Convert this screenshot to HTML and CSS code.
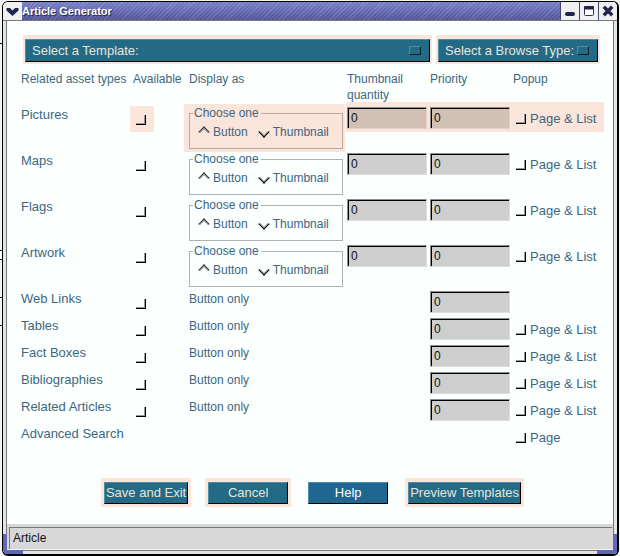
FILE: index.html
```
<!DOCTYPE html>
<html lang="en">
<head>
<meta charset="utf-8">
<title>Article Generator</title>
<link rel="stylesheet" href="styles.css">
<script src="rows.js" defer></script>
</head>
<body>
<div class="window">
  <header class="titlebar">
    <button class="winbtn" type="button" aria-label="Window menu"><svg width="13" height="9" viewBox="0 0 13 9"><path d="M0.500 1h3.500l2.500 2.500L9 1h3.500v2.500L6.500 9 0.500 3.500z" fill="#23234f"/></svg></button>
    <h1 class="title">Article Generator</h1>
    <button class="winbtn" type="button" aria-label="Minimize"><svg width="12" height="12" viewBox="0 0 12 12"><rect x="1" y="7" width="10" height="4" rx="2" fill="#23234f"/></svg></button>
    <button class="winbtn" type="button" aria-label="Maximize"><svg width="12" height="12" viewBox="0 0 12 12"><rect x="1.500" y="1.500" width="9" height="9" rx="1" fill="#fff" stroke="#33335c"/><path d="M1 2q0-1 1-1h8q1 0 1 1v2.500H1z" fill="#23234f"/></svg></button>
    <button class="winbtn" type="button" aria-label="Close"><svg width="12" height="12" viewBox="0 0 12 12"><path d="M3 3l6 6M9 3l-6 6" stroke="#23234f" stroke-width="3.400" stroke-linecap="square"/></svg></button>
  </header>
  <div class="frame">
    <form class="content">
      <div class="pickers">
        <div class="picker picker-wide"><select aria-label="Template"><option>Select a Template:</option></select></div>
        <div class="picker picker-browse"><select aria-label="Browse type"><option>Select a Browse Type:</option></select></div>
      </div>
      <table class="assets">
        <colgroup><col class="c-name"><col class="c-avail"><col class="c-display"><col class="c-field"><col class="c-field"><col></colgroup>
        <thead>
          <tr><th>Related asset types</th><th>Available</th><th>Display as</th><th>Thumbnail quantity</th><th>Priority</th><th>Popup</th></tr>
        </thead>
        <tbody id="rows"></tbody>
      </table>
      <div class="actions">
        <span class="slot lit"><button type="button">Save and Exit</button></span>
        <span class="slot lit"><button type="button" class="fixed">Cancel</button></span>
        <span class="slot"><button type="button" class="fixed help">Help</button></span>
        <span class="slot lit"><button type="button">Preview Templates</button></span>
      </div>
    </form>
    <footer class="status"><div class="status-text">Article</div></footer>
  </div>
</div>
</body>
</html>
```
FILE: styles.css
```
*, *::before, *::after { box-sizing: border-box; }

body {
  margin: 0;
  min-height: 100vh;
  padding: 1px 1px 0 2px;
  display: flex;
  background: linear-gradient(#000 0 0) 0 43px / 2px 1px no-repeat,
    repeating-linear-gradient(#000 0 1px, #fff 1px 9px) 0 250px / 2px 12px no-repeat,
    linear-gradient(#000 0 0) 0 297px / 2px 1px no-repeat,
    linear-gradient(#000 0 0) 0 325px / 2px 1px no-repeat,
    #f4f6f5;
  color: #3d677e;
  font: 12px/16px "Liberation Sans", Arial, sans-serif;
}

button, input, select { font: inherit; margin: 0; }

.window {
  position: relative;
  flex: 1;
  display: flex;
  flex-direction: column;
  border: 1px solid #000;
  border-right-width: 2px;
  border-bottom-width: 2px;
  border-radius: 6px;
  overflow: hidden;
}

.window::before, .window::after {
  content: "";
  position: absolute;
  bottom: 0;
  width: 20px;
  height: 20px;
  border: 0 solid #6068b4;
  border-bottom-width: 4px;
  z-index: 1;
}
.window::before { left: 0; border-left-width: 4px; }
.window::after { right: 0; border-right-width: 4px; }

.titlebar {
  display: flex;
  height: 19px;
  border-bottom: 1px solid #77777f;
  background: repeating-linear-gradient(135deg, rgba(255,255,255,.13) 0 1px, transparent 1px 3px),
    linear-gradient(#7880c8, #50549a);
}

.title {
  flex: 1;
  margin: 0;
  color: #fff;
  font-size: 11px;
  line-height: 18px;
  text-shadow: 1px 1px 1px #22224c;
}

.winbtn {
  width: 19px;
  padding: 0;
  border: 0;
  border-left: 1px solid #444468;
  background: #f0f0f2;
  display: grid;
  place-items: center;
}
.winbtn:first-child { border-left: 0; }

.frame {
  flex: 1;
  display: flex;
  flex-direction: column;
  border: solid #e4e4e4;
  border-width: 0 3px 3px;
  box-shadow: inset 1px -1px #777, inset -1px 0 #777;
  padding: 0 1px 2px;
}

.content {
  flex: 1;
  padding: 14px 9px 16px 14px;
  background: #fbfffe;
}

.pickers {
  display: flex;
  gap: 4px;
  padding: 0 4px 0 2px;
}

.picker {
  position: relative;
  padding: 4px 2px 2px;
  background: #fbe4d9;
}
.picker-wide { flex: 1; }
.picker-browse { width: 164px; }

.picker select, .actions button {
  appearance: none;
  display: block;
  height: 23px;
  border: 1px solid #000;
  border-top-color: #4c90a8;
  border-left-color: #4c90a8;
  border-radius: 0;
  background: #236a86;
  color: #e8e6da;
}
.picker select { width: 100%; padding: 0 6px; font-size: 13px; }
.picker::after {
  content: "";
  position: absolute;
  right: 11px;
  top: 11px;
  width: 12px;
  height: 9px;
  border: 1px solid #0a1c26;
  border-top-color: #4c90a8;
  border-left-color: #4c90a8;
  pointer-events: none;
}

.assets {
  table-layout: fixed;
  width: 100%;
  margin-top: 7px;
  border-collapse: collapse;
}
.c-name { width: 112px; }
.c-avail { width: 56px; }
.c-display { width: 158px; }
.c-field { width: 83px; }

.assets th, .assets td {
  position: relative;
  z-index: 0;
  padding: 0;
  text-align: left;
  vertical-align: top;
  font-weight: normal;
}
.assets thead tr { height: 33px; }
.assets tbody tr { height: 27px; }
.assets tbody tr.tall { height: 46px; }
.assets tbody .name, .assets tbody .only { padding-top: 3px; }
.assets tbody .name { font-size: 13px; }
.assets tbody .avail { padding: 11px 0 0 3px; }
.assets tbody .field { padding-top: 3px; }
.assets tbody .popup { padding: 7px 0 0 3px; }

.lit .avail::before, .lit .display::before, .lit .field::before, .lit .popup::before {
  content: "";
  position: absolute;
  z-index: -1;
  background: #fbe4d9;
}
.lit .avail::before { left: -3px; width: 24px; top: 2px; height: 26px; }
.lit .display::before { left: -5px; right: 2px; top: 0; height: 48px; }
.lit .field::before, .lit .popup::before { left: -1px; right: 0; top: -2px; height: 30px; }

.field input {
  display: block;
  width: 80px;
  height: 22px;
  padding: 0 3px;
  border: 1px solid #8c8c8c;
  border-right-color: #ddd;
  border-bottom-color: #ddd;
  border-radius: 0;
  background: #cecece;
  box-shadow: inset 1px 1px #000;
  color: #111;
}
.lit .field input { background: #d2c0b4; border-right-color: #e4d0c4; border-bottom-color: #e4d0c4; }

input[type="checkbox"] {
  appearance: none;
  display: block;
  flex: none;
  width: 10px;
  height: 10px;
  border: solid #000;
  border-width: 0 1px 1px 0;
  box-shadow: inset -1px -1px #999;
}

.popup label { display: flex; gap: 4px; font-size: 13px; white-space: nowrap; }
.popup input[type="checkbox"] { margin-top: 3px; }

fieldset {
  min-width: 0;
  margin: 2px 4px 0 0;
  padding: 4px 8px 8px;
  border: 1px solid #b0b0b0;
}
.lit fieldset { border-color: #b9aa9f; }
legend {
  margin-left: -5px;
  padding: 0 2px 0 1px;
  line-height: 14px;
}
.choices { display: flex; gap: 10px; white-space: nowrap; }
.choices label { display: flex; align-items: center; gap: 5px; }

input[type="radio"] {
  appearance: none;
  width: 8px;
  height: 8px;
  margin-left: 2px;
  transform: rotate(45deg);
  border: 0 solid;
}
input.radio-up { border-width: 1px 0 0 1px; border-color: #333; box-shadow: inset 1px 1px #999; }
input.radio-down { border-width: 0 1px 1px 0; border-color: #000; box-shadow: inset -1px -1px #999; }

.actions {
  display: flex;
  justify-content: center;
  gap: 14px;
  margin-top: 28px;
}
.slot { padding: 4px 3px 3px; }
.slot.lit { background: #fbe4d9; }
.actions button { height: 22px; padding: 0 1px; font-size: 13px; white-space: nowrap; }
.actions .fixed { width: 80px; }
.actions .help { background: #1f6690; color: #fff; }

.status {
  padding: 3px 1px 0 2px;
  background: #d8d8d8;
}
.status-text {
  height: 22px;
  padding: 2px 3px;
  border-top: 1px solid #777;
  border-left: 1px solid #777;
  color: #111;
}
```
FILE: rows.js
```
const assets = [
  { name: "Pictures", choose: true, priority: true, popup: "Page & List", lit: true },
  { name: "Maps", choose: true, priority: true, popup: "Page & List" },
  { name: "Flags", choose: true, priority: true, popup: "Page & List" },
  { name: "Artwork", choose: true, priority: true, popup: "Page & List" },
  { name: "Web Links", priority: true },
  { name: "Tables", priority: true, popup: "Page & List" },
  { name: "Fact Boxes", priority: true, popup: "Page & List" },
  { name: "Bibliographies", priority: true, popup: "Page & List" },
  { name: "Related Articles", priority: true, popup: "Page & List" },
  { name: "Advanced Search", popup: "Page" }
];

const field = (id, label) => `<input type="text" id="${id}" value="0" aria-label="${label}">`;

const choices = i => `<fieldset><legend>Choose one</legend><div class="choices">
  <label><input type="radio" class="radio-up" name="display${i}">Button</label>
  <label><input type="radio" class="radio-down" name="display${i}">Thumbnail</label></div></fieldset>`;

document.getElementById("rows").innerHTML = assets.map((a, i) => {
  const display = a.choose ? `<td class="display">${choices(i)}</td>`
    : `<td class="only">${a.priority ? "Button only" : ""}</td>`;
  const popup = a.popup ? `<label><input type="checkbox">${a.popup.replace("&", "&amp;")}</label>` : "";
  return `<tr class="${a.choose ? "tall" : ""} ${a.lit ? "lit" : ""}">
    <td class="name">${a.name}</td>
    <td class="avail">${a.priority ? `<input type="checkbox" aria-label="${a.name} available">` : ""}</td>
    ${display}
    <td class="field">${a.choose ? field("qty" + i, a.name + " thumbnail quantity") : ""}</td>
    <td class="field">${a.priority ? field("pri" + i, a.name + " priority") : ""}</td>
    <td class="popup">${popup}</td></tr>`;
}).join("");
```
